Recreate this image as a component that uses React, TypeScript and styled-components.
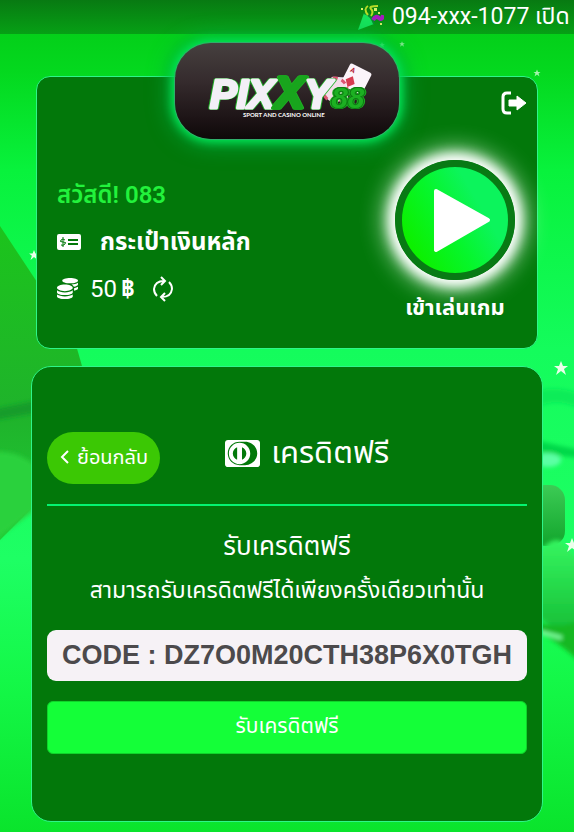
import React from "react";
import styled, { createGlobalStyle } from "styled-components";
import { FaCcDinersClub, FaCoins } from "react-icons/fa";

const thai = `Roboto, "Noto Sans Thai", "Noto Sans", sans-serif`;

const GlobalStyle = createGlobalStyle`
  * { box-sizing: border-box; }
  body { margin: 0; background: #10e83c; font-family: ${thai}; color: #fff; }
  button, input { font-family: inherit; color: inherit; }
  h1, h2, p { margin: 0; font-weight: 400; }
`;

const Page = styled.div`
  position: relative;
  min-height: 100vh;
  padding-bottom: 10px;
  overflow: hidden;
  background: linear-gradient(180deg, #04c815 0, #04d81e 70px, #08f23c 170px, #14fc5c 350px, #1eff64 560px, #14f848 680px, #0ae42c 832px);
`;

const Scenery = styled.svg`
  position: absolute;
  inset: 0;
  width: 100%;
  height: 832px;
`;

const Ticker = styled.header`
  position: relative;
  height: 34px;
  padding-left: 62%;
  display: flex;
  align-items: center;
  gap: 8px;
  overflow: hidden;
  white-space: nowrap;
  font-size: 23px;
  line-height: 30px;
  background: linear-gradient(180deg, #087a12, #06a015);
`;

const Popper = styled.svg`
  flex: none;
  width: 28px;
  height: 28px;
`;

const Main = styled.main`
  position: relative;
  display: flex;
  flex-direction: column;
  align-items: center;
  padding: 9px 31px 0;
`;

const Brand = styled.a`
  position: relative;
  z-index: 1;
  display: block;
  width: 224px;
  height: 96px;
  border-radius: 36px;
  background: linear-gradient(180deg, #46403f 0%, #352b2d 40%, #1c1315 80%, #0e0909 100%);
  box-shadow: 0 0 0 1px #2fae6a, 0 0 10px 3px #00ee58, 0 0 22px 5px #00a840;
`;

const Wordmark = styled.text`
  filter: drop-shadow(1px 0 0 #1fae24) drop-shadow(-1px 0 0 #1fae24);
`;

const Panel = styled.section<{ $radius: number }>`
  align-self: stretch;
  border: 1px solid #2df58a;
  border-radius: ${(p) => p.$radius}px;
  background: #02780a;
`;

const WalletPanel = styled(Panel)`
  margin: -63px 5px 17px;
  min-height: 273px;
  padding: 14px 10px 0 20px;
  display: grid;
  grid-template-columns: 1fr auto;
  grid-template-rows: 24px 1fr;
`;

const LogoutButton = styled.button`
  grid-column: 2;
  justify-self: end;
  padding: 0;
  border: 0;
  background: none;
  line-height: 0;
`;

const Account = styled.div`
  grid-column: 1;
  padding-top: 56px;
`;

const Line = styled.div`
  display: flex;
  align-items: center;
  height: 47px;
  font-size: 24px;
  line-height: 32px;
`;

const Greeting = styled(Line)`
  color: #22f23c;
  font-weight: 600;
`;

const WalletTitle = styled(Line)`
  gap: 19px;
  font-weight: 700;
`;

const Balance = styled(Line)`
  gap: 12px;
`;

const Amount = styled.span`
  display: flex;
  gap: 4px;
`;

const RefreshButton = styled.button`
  margin-left: 6px;
  padding: 0;
  border: 0;
  background: none;
  line-height: 0;
`;

const PlayLink = styled.a`
  margin: 45px 12px 0 0;
  display: flex;
  flex-direction: column;
  align-items: center;
  gap: 12px;
  color: #fff;
  font-size: 22px;
  font-weight: 700;
  line-height: 32px;
  text-decoration: none;
`;

const PlayDisc = styled.span`
  display: grid;
  place-items: center;
  width: 120px;
  height: 120px;
  border: 7px solid #087a14;
  border-radius: 50%;
  background: linear-gradient(60deg, #0cf000 15%, #06f62c 45%, #0cf45c 70%);
  box-shadow: 0 0 12px 6px #fff, 0 0 26px 8px #d8f8dc;
`;

const CreditPanel = styled(Panel)`
  padding: 65px 15px 67px;
`;

const TitleBar = styled.div`
  display: flex;
  align-items: flex-start;
  gap: 65px;
  height: 74px;
  border-bottom: 2px solid #04f470;
`;

const BackButton = styled.button`
  display: flex;
  align-items: center;
  gap: 8px;
  height: 52px;
  padding: 0 12px 2px;
  border: 0;
  border-radius: 26px;
  background: #3bc804;
  font-size: 20px;
  line-height: 32px;
  white-space: nowrap;
`;

const Title = styled.h1`
  display: flex;
  align-items: center;
  gap: 11px;
  height: 42px;
  font-size: 31px;
  line-height: 40px;
  white-space: nowrap;
`;

const Subtitle = styled.h2`
  margin-top: 20px;
  font-size: 26px;
  line-height: 40px;
  text-align: center;
`;

const Note = styled.p`
  margin: 4px 0 18px;
  font-size: 23px;
  line-height: 42px;
  text-align: center;
`;

const CodeField = styled.input`
  display: block;
  width: 100%;
  height: 51px;
  padding: 0;
  border: 0;
  border-radius: 9px;
  background: #f6f2f6;
  color: #4c4a4c;
  font: 700 27px "Liberation Sans", Arial, sans-serif;
  text-align: center;
`;

const ClaimButton = styled.button`
  display: block;
  width: 100%;
  height: 53px;
  margin-top: 20px;
  padding: 0 0 4px;
  border: 1px solid #0fd32a;
  border-radius: 6px;
  background: #14ff38;
  font-size: 21px;
  line-height: 32px;
`;

const starPath = "M0-7 2-2 7-2 3 1 5 7 0 3-5 7-3 1-7-2-2-2Z";

const Background = () => (
  <Scenery viewBox="0 0 574 832" preserveAspectRatio="none" aria-hidden="true">
    <defs>
      <linearGradient id="leg" x1="0" y1="0" x2="0" y2="1">
        <stop offset="0" stopColor="#1cc41c" />
        <stop offset="0.6" stopColor="#1fb32b" />
        <stop offset="1" stopColor="#20cc35" />
      </linearGradient>
      <linearGradient id="orb" x1="0" y1="0" x2="0" y2="1">
        <stop offset="0" stopColor="#3ccb55" />
        <stop offset="1" stopColor="#12a52c" />
      </linearGradient>
      <linearGradient id="hand" x1="0" y1="0" x2="0" y2="1">
        <stop offset="0" stopColor="#35f560" />
        <stop offset="1" stopColor="#16bd35" />
      </linearGradient>
      <filter id="soft"><feGaussianBlur stdDeviation="2" /></filter>
    </defs>
    <path d="M0 226 74 338 82 366 60 480 0 540Z" fill="url(#leg)" />
    <g filter="url(#soft)">
      <path d="M-5 409 40 400V412L-5 420Z" fill="#139c2c" />
      <path d="M-5 452Q20 450 40 470V506L-5 540Z" fill="#2ad13c" />
      <path d="M540 390Q560 386 580 394V408Q556 398 540 406Z" fill="#08ec58" />
      <path d="M535 440Q560 446 580 450V458Q556 456 535 450Z" fill="#06d848" />
      <ellipse cx="548" cy="460" rx="13" ry="7" fill="#5cffa4" />
    </g>
    <rect x="530" y="485" width="35" height="61" rx="15" fill="url(#orb)" />
    <g filter="url(#soft)">
      <path d="M535 556Q556 530 566 546L580 562V634Q554 632 535 614Z" fill="url(#hand)" />
      <path d="M535 622Q560 630 580 620V662Q556 640 535 630Z" fill="#14b824" />
      <path d="M540 632 562 638" stroke="#7cff9c" strokeWidth="4" />
    </g>
    <g fill="#eaffea">
      <path d={starPath} transform="translate(561 368)" />
      <path d={starPath} transform="translate(572 545)" />
      <path d={starPath} transform="translate(34 255) scale(.7)" />
      <path d={starPath} transform="translate(537 73) scale(.5)" opacity=".7" />
      <path d={starPath} transform="translate(402 44) scale(.4)" opacity=".6" />
      <path d={starPath} transform="translate(382 45) scale(.4)" opacity=".6" />
    </g>
  </Scenery>
);

const Logo = () => (
  <svg width="224" height="96" viewBox="0 0 224 96" role="img" aria-label="PIXXY88">
    <g transform="translate(181 36) rotate(27)">
      <rect x="-25" y="-1" width="18" height="24" rx="2" fill="#e9dfec" transform="rotate(-24)" />
      <rect x="-12" y="-12" width="24" height="24" rx="2" fill="#fbf4fa" />
      <path d="M-4-1 1 5-4 11-9 5Z" fill="#d63c50" />
      <text x="-9" y="-4" fontSize="7" fontWeight="700" fill="#b31e35">A</text>
    </g>
    <circle cx="160" cy="47" r="12" fill="#f5dce8" stroke="#dd5472" strokeWidth="3" strokeDasharray="5 4" />
    <Wordmark
      x="35"
      y="65"
      fontFamily="Liberation Sans, Arial, sans-serif"
      fontWeight="700"
      fontStyle="italic"
      fontSize="40"
      fill="#f3eff6"
      stroke="#f3eff6"
      strokeWidth="3"
      strokeLinejoin="round"
      paintOrder="stroke"
    >
      PIX
      <tspan fontSize="45" fill="#18a51d" stroke="#18a51d">X</tspan>
      Y
      <tspan fontSize="30" fill="#1cb022" stroke="#0d7a12" strokeWidth="2">88</tspan>
    </Wordmark>
    <text x="68" y="74" fontFamily="Lato, sans-serif" fontSize="6" fontWeight="700" fill="#fff">SPORT AND CASINO ONLINE</text>
  </svg>
);

const LogoutIcon = () => (
  <svg width="26" height="24" viewBox="0 0 26 24" aria-hidden="true">
    <path d="M10 2H6Q2 2 2 6V18Q2 22 6 22H10" fill="none" stroke="#fff" strokeWidth="3" />
    <path d="M8 9H16V5L25 12 16 19V15H8Z" fill="#fff" stroke="#fff" strokeLinejoin="round" />
  </svg>
);

const MoneyCardIcon = () => (
  <svg width="24" height="16" viewBox="0 0 24 16" aria-hidden="true">
    <rect width="24" height="16" rx="2" fill="#fff" />
    <path d="M11 6H21M11 10H21" stroke="#02780a" strokeWidth="2" />
    <path d="M8 6Q6 4 4 6T6 8T8 10T4 11M6 3V13" fill="none" stroke="#02780a" strokeWidth="1" />
  </svg>
);

const RefreshIcon = () => (
  <svg width="20" height="26" viewBox="0 0 20 26" fill="none" stroke="#fff" strokeWidth="2" aria-hidden="true">
    <path d="M4 20Q1 17 1 13Q2 5 11 5M8 1 12 5 8 9" />
    <path d="M16 6Q19 9 19 13Q18 21 9 21M12 25 8 21 12 17" />
  </svg>
);

const BackIcon = () => (
  <svg width="10" height="16" viewBox="0 0 10 16" aria-hidden="true">
    <path d="M9 2 3 8 9 14" fill="none" stroke="#fff" strokeWidth="2" />
  </svg>
);

export default function App() {
  return (
    <Page>
      <GlobalStyle />
      <Background />
      <Ticker>
        <Popper viewBox="0 0 28 28" aria-hidden="true">
          <path d="M2 27 8 10Q15 12 18 21Z" fill="#16e45c" />
          <path d="M8 10Q15 12 18 21" fill="none" stroke="#0b8d31" strokeWidth="2" />
          <path d="M12 12Q7 6 12 3M15 13Q18 9 15 6T22 3" fill="none" stroke="#b8dc28" strokeWidth="2" />
          <path d="M17 17Q20 12 23 15T27 12" fill="none" stroke="#a61cc0" strokeWidth="4" />
          <path d="M5 5h2v2H5ZM18 5h3v3h-3ZM24 20h2v2h-2ZM22 9h2v2h-2Z" fill="#d4f065" />
        </Popper>
        <span>094-xxx-1077 เปิด</span>
      </Ticker>
      <Main>
        <Brand href="#"><Logo /></Brand>
        <WalletPanel $radius={14}>
          <LogoutButton aria-label="ออกจากระบบ"><LogoutIcon /></LogoutButton>
          <Account>
            <Greeting>สวัสดี! 083</Greeting>
            <WalletTitle><MoneyCardIcon />กระเป๋าเงินหลัก</WalletTitle>
            <Balance>
              <FaCoins size={21} />
              <Amount>50<b>฿</b></Amount>
              <RefreshButton aria-label="รีเฟรช"><RefreshIcon /></RefreshButton>
            </Balance>
          </Account>
          <PlayLink href="#">
            <PlayDisc>
              <svg width="106" height="106" viewBox="0 0 106 106" aria-hidden="true">
                <path d="M34 24 86 53 34 83Z" fill="#fff" stroke="#fff" strokeWidth="4" strokeLinejoin="round" />
              </svg>
            </PlayDisc>
            เข้าเล่นเกม
          </PlayLink>
        </WalletPanel>
        <CreditPanel $radius={20}>
          <TitleBar>
            <BackButton><BackIcon />ย้อนกลับ</BackButton>
            <Title><FaCcDinersClub size={35} />เครดิตฟรี</Title>
          </TitleBar>
          <Subtitle>รับเครดิตฟรี</Subtitle>
          <Note>สามารถรับเครดิตฟรีได้เพียงครั้งเดียวเท่านั้น</Note>
          <CodeField aria-label="CODE" readOnly value="CODE : DZ7O0M20CTH38P6X0TGH" />
          <ClaimButton>รับเครดิตฟรี</ClaimButton>
        </CreditPanel>
      </Main>
    </Page>
  );
}
